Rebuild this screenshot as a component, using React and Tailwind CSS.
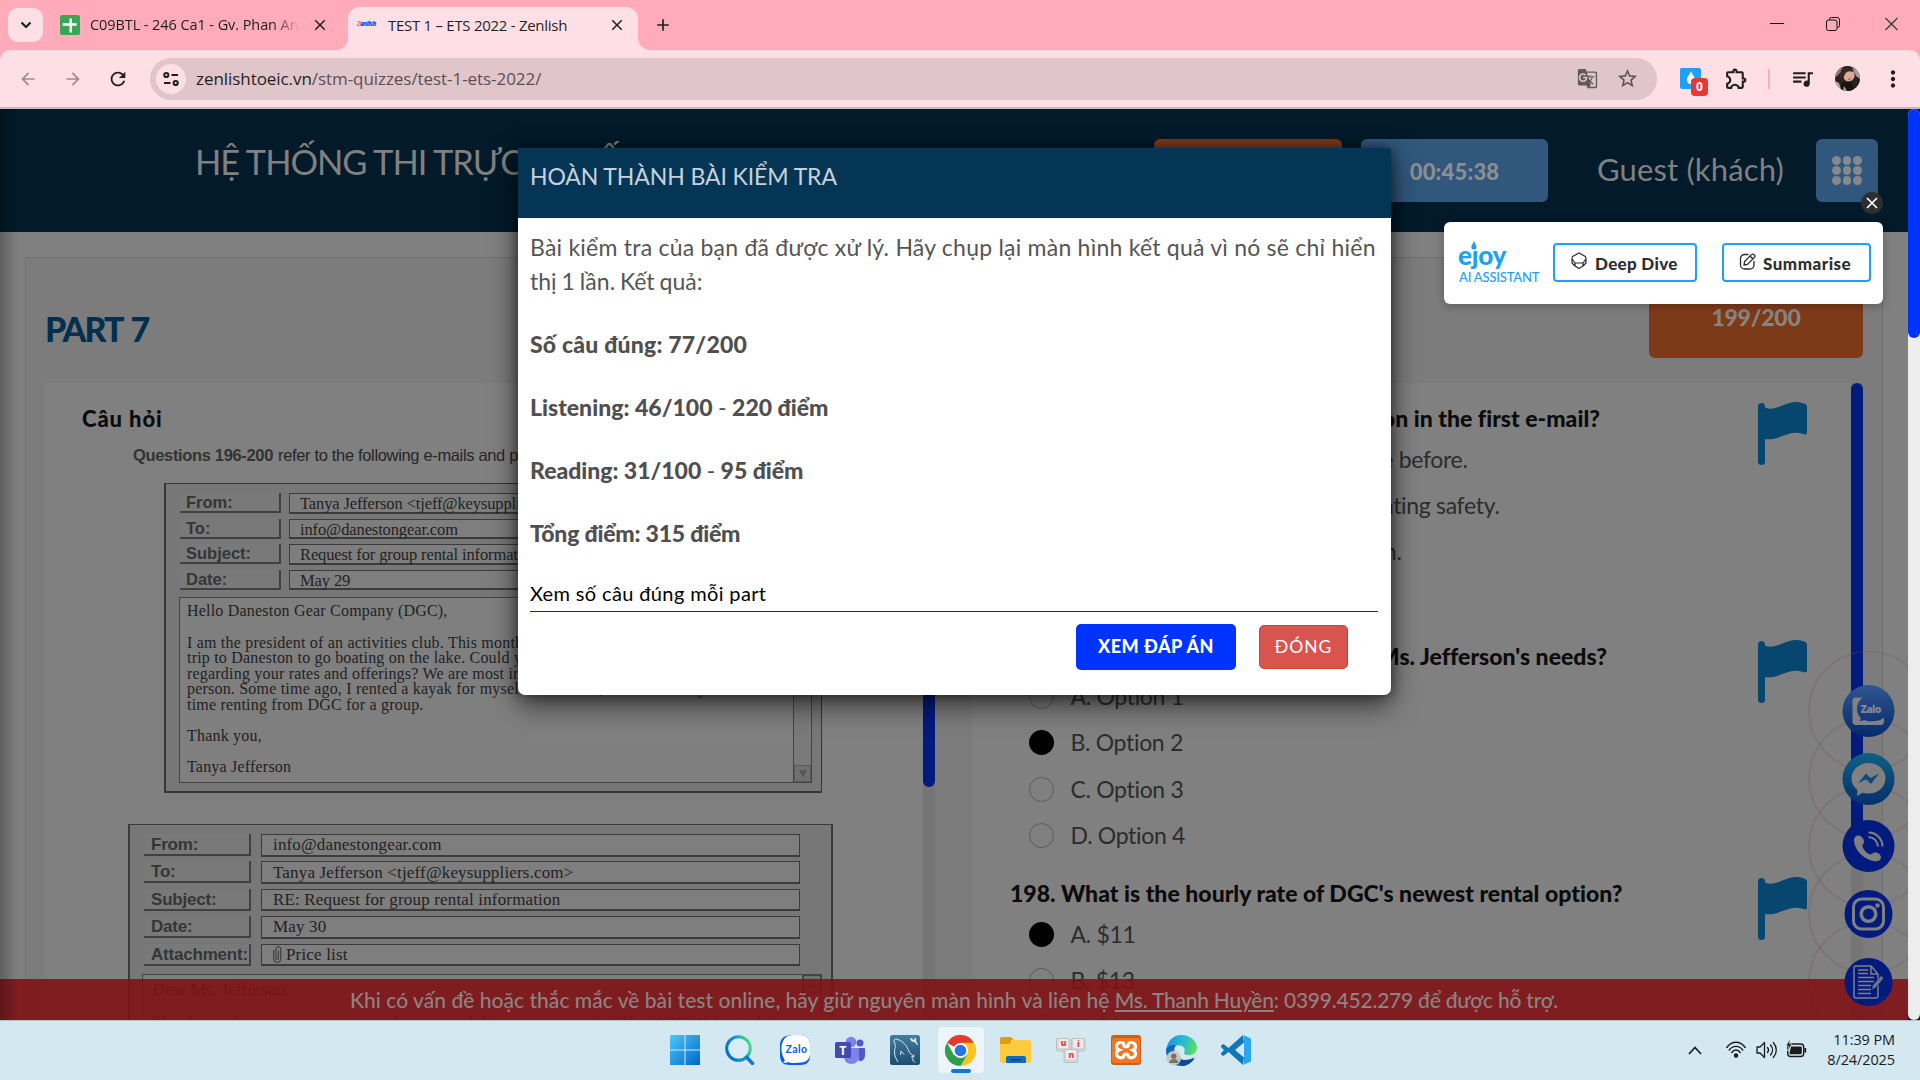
import React from "react";
import {
  MdArrowBack, MdArrowForward, MdRefresh, MdStarBorder, MdOutlineExtension,
  MdQueueMusic, MdMoreVert, MdGTranslate, MdClose, MdAdd,
} from "react-icons/md";

function TabStrip() {
  return (
    <div className="flex h-[50px] w-full bg-[#ffabba] font-['Open_Sans',sans-serif] text-[#1f1f1f]">
      <div className="flex w-[348px] items-start pl-2">
        <div className="mt-2 flex h-[34px] w-[35px] items-center justify-center rounded-[10px] bg-[#ffdfe6]">
          <svg width="12" height="8" viewBox="0 0 12 8" fill="none" stroke="#1f1f1f" strokeWidth="2.2"><path d="M1.5 1.5 6 6l4.500-4.500" /></svg>
        </div>
        <div className="ml-[17px] mt-[15px] flex h-5 w-5 items-center justify-center rounded-[2px] bg-[#34a853]">
          <svg width="16" height="16" viewBox="0 0 16 16"><path d="M9.500 1v14M1.500 7h14" stroke="#fff" strokeWidth="2.400" transform="translate(-.8 .5)" /></svg>
        </div>
        <div className="ml-[10px] mt-[11px] w-[209px] overflow-hidden whitespace-nowrap text-[14.500px] leading-7 tracking-[-0.080px] [mask-image:linear-gradient(to_right,black_88%,transparent)]">
          C09BTL - 246 Ca1 - Gv. Phan Anh
        </div>
        <MdClose className="ml-[12px] mt-[16px] h-[18px] w-[18px]" />
      </div>
      <div className="relative mt-[7px] flex h-[43px] w-[290px] rounded-t-[12px] bg-[#ffdfe6]">
        <svg className="absolute bottom-0 left-[-12px]" width="12" height="12"><path d="M12 0v12H0A12 12 0 0 0 12 0Z" fill="#ffdfe6" /></svg>
        <svg className="absolute bottom-0 right-[-12px]" width="12" height="12"><path d="M0 0v12h12A12 12 0 0 1 0 0Z" fill="#ffdfe6" /></svg>
        <div className="ml-[9px] mt-[12px] w-[21px] text-[6.500px] font-extrabold italic leading-[10px] tracking-[-0.600px] text-[#1d4fff]"><span className="text-[#ff8a1e]">Z</span>enlish</div>
        <div className="ml-[10px] mt-[4px] w-[218px] whitespace-nowrap text-[15px] leading-7 tracking-[-0.280px]">TEST 1 – ETS 2022 - Zenlish</div>
        <MdClose className="ml-[2px] mt-[9px] h-[18px] w-[18px]" />
      </div>
      <MdAdd className="ml-[15px] mt-[15px] h-5 w-5" />
      <div className="ml-auto flex items-start pr-[22px] pt-[17px]">
        <svg width="14" height="14" viewBox="0 0 14 14"><path d="M0 6.500h14" stroke="#111" /></svg>
        <svg className="ml-[42px]" width="14" height="14" viewBox="0 0 14 14" fill="none" stroke="#111"><rect x=".5" y="3" width="10.500" height="10.500" rx="2" /><path d="M3.500 3V2.500a2 2 0 0 1 2-2h5.500a2.500 2.500 0 0 1 2.500 2.500v5.500a2 2 0 0 1-2 2" /></svg>
        <svg className="ml-[45px]" width="13" height="14" viewBox="0 0 13 14"><path d="M.5 1l12 12M12.500 1l-12 12" stroke="#333" strokeWidth="1.100" /></svg>
      </div>
    </div>
  );
}

function Toolbar() {
  return (
    <div className="h-[57px] w-full bg-[#ffabba]">
      <div className="flex h-full w-full items-center rounded-t-[10px] bg-[#ffdfe6] font-['Open_Sans',sans-serif] text-[#1f1f1f]">
        <div className="flex w-[150px] shrink-0 items-center gap-[24.500px] pl-[18px]">
          <MdArrowBack className="h-5 w-5 text-[#a08b90]" />
          <MdArrowForward className="h-5 w-5 text-[#a08b90]" />
          <MdRefresh className="h-[22px] w-[22px]" />
        </div>
        <div className="flex h-[42px] w-[1507px] shrink-0 items-center rounded-full bg-[#e0c5ca] pl-[6px]">
          <div className="flex h-[30px] w-[30px] items-center justify-center rounded-full bg-[#ffdfe6]">
            <svg width="16" height="16" viewBox="0 0 16 16" fill="none" stroke="#1f1f1f" strokeWidth="2"><circle cx="3.300" cy="4" r="2.100" /><path d="M8.500 4H15M1 12h6.500" /><circle cx="12.700" cy="12" r="2.100" /></svg>
          </div>
          <div className="ml-[10px] whitespace-nowrap pt-[1px] text-[17px] leading-7 tracking-[-0.060px]">zenlishtoeic.vn<span className="text-[#5c4f52]">/stm-quizzes/test-1-ets-2022/</span></div>
          <MdGTranslate className="ml-auto h-[21px] w-[21px] text-[#5f5a5c]" />
          <MdStarBorder className="ml-[18px] mr-[18px] h-[23px] w-[23px] text-[#5a5255]" />
        </div>
        <div className="relative ml-[23px] h-[22px] w-[28px]">
          <div className="flex h-[21px] w-[21px] items-center justify-center rounded-[2px] bg-[#1da1f2]">
            <svg width="10" height="14" viewBox="0 0 10 14"><path d="M5 0c1 4 4 5 4 9a4 4 0 0 1-8 0c0-4 3-5 4-9Z" fill="#fff" /></svg>
          </div>
          <div className="absolute left-[11px] top-[10px] flex h-[18px] w-[17px] items-center justify-center rounded-[4px] bg-[#e53935] text-[12px] font-bold text-white">0</div>
        </div>
        <MdOutlineExtension className="ml-[16px] h-[25px] w-[25px]" />
        <div className="ml-[19px] h-5 w-[2px] bg-[#ffabba]" />
        <MdQueueMusic className="ml-[20px] h-[25px] w-[25px]" />
        <svg className="ml-[20px]" width="25" height="25" viewBox="0 0 25 25">
          <defs><clipPath id="av"><circle cx="12.500" cy="12.500" r="12.500" /></clipPath></defs>
          <g clipPath="url(#av)">
            <rect width="25" height="25" fill="#2a211f" />
            <path d="M0 12C0 4 5 0 8 0L6 6Z" fill="#8a7f7a" /><path d="M17 1l8 5v7l-4-3Z" fill="#a7a294" />
            <ellipse cx="14" cy="9.500" rx="5.500" ry="6" fill="#d9aa9c" transform="rotate(35 14 9.500)" />
            <path d="M6 4c4-4 11-3 12 2-5-2-8 0-9 5L5 12Z" fill="#3a2724" />
            <path d="M13 13.500l3-1" stroke="#b34b4b" strokeWidth="1.200" /><path d="M7 17l9-1 4 9H5Z" fill="#171314" /><path d="M9 20l3 5H8ZM0 15l4 2 2 6-6-2Z" fill="#b8a79d" />
          </g>
        </svg>
        <MdMoreVert className="ml-[20px] h-[26px] w-[26px]" />
      </div>
    </div>
  );
}

function SiteHeader() {
  return (
    <div className="flex h-[123px] items-start bg-[#021a29] pl-[195px] pt-[30px]">
      <div className="mt-[-7px] w-[959px] whitespace-nowrap font-['Lato',sans-serif] text-[34.500px] leading-[60px] tracking-[-1.070px] text-[#808080]">HỆ THỐNG THI TRỰC <span className="tracking-[0.300px]">TUYẾN</span></div>
      <div className="h-[63px] w-[188px] rounded-[6px] bg-[#7d3a19]" />
      <div className="ml-[19px] h-[63px] w-[187px] rounded-[6px] bg-[#31577d] text-center font-['Lato',sans-serif] text-[22px] font-black leading-[66px] tracking-[0.200px] text-[#8c8f92]">00:45:38</div>
      <div className="ml-[49px] w-[187px] whitespace-nowrap font-['Lato',sans-serif] text-[31px] leading-[60px] tracking-[0.150px] text-[#808080]">Guest (khách)</div>
      <div className="ml-[32px] grid h-[63px] w-[62px] grid-cols-3 content-center justify-center justify-items-center gap-x-[1px] gap-y-[1.500px] rounded-[6px] bg-[#31577d] px-[16px]">
        {Array.from({ length: 9 }, (_, i) => <div key={i} className="h-[8.500px] w-[8.500px] rounded-full bg-[#85898d]" />)}
      </div>
    </div>
  );
}

function MailRow({ label, value, big, clip }) {
  return big ? (
    <div className="flex h-[27.400px] gap-[10px] pl-[14px]">
      <div className="h-[22px] w-[107px] border-b-2 border-r-2 border-[#404040] bg-[#797979] pl-[7px] font-['Liberation_Sans',sans-serif] text-[17px] font-bold leading-[21px] tracking-[-0.200px] text-[#353535]">{label}</div>
      <div className="flex h-[22.500px] w-[539px] items-center border border-b-2 border-[#3c3c3c] bg-[#7e7e7e] pl-[11px] font-['Liberation_Serif',serif] text-[17px] leading-[22px] tracking-[0.160px] text-[#222]">
        {clip && <svg className="mr-[4px]" width="9" height="19" viewBox="0 0 9 19" fill="none" stroke="#333" strokeWidth="1"><path d="M.8 5v9a3.500 3.500 0 0 0 7 0V4a2.400 2.400 0 0 0-4.800 0v9.500a1.200 1.200 0 0 0 2.400 0V6" /></svg>}
        <span className="pt-[1px]">{value}</span>
      </div>
    </div>
  ) : (
    <div className="flex h-[25.600px] gap-[8px] pl-[14px]">
      <div className="h-[20px] w-[101px] border-b-2 border-r-2 border-[#404040] bg-[#797979] pl-[6px] font-['Liberation_Sans',sans-serif] text-[16.500px] font-bold leading-[18px] text-[#353535]">{label}</div>
      <div className="h-[20.500px] w-[511px] border border-b-2 border-[#3c3c3c] bg-[#7e7e7e] pl-[10px] font-['Liberation_Serif',serif] text-[16.500px] leading-[19px] tracking-[-0.120px] text-[#222]">{value}</div>
    </div>
  );
}

function LeftPanel() {
  const body = [
    "Hello Daneston Gear Company (DGC),", "",
    "I am the president of an activities club. This month, I am organizing a group",
    "trip to Daneston to go boating on the lake. Could you give me information",
    "regarding your rates and offerings? We are most interested in kayaks for one",
    "person. Some time ago, I rented a kayak for myself from DGC; this will be my first",
    "time renting from DGC for a group.", "", "Thank you,", "", "Tanya Jefferson",
  ];
  return (
    <div className="h-[640px] w-[878px] overflow-hidden bg-[#808080]">
      <div className="mt-[19px] pl-[37px] font-['Lato',sans-serif] text-[22px] font-black leading-[34px] tracking-[0.900px] text-[#0b0b0b]">Câu hỏi</div>
      <div className="flex h-[38px] gap-[5px] whitespace-nowrap pl-[88px] font-['Liberation_Sans',sans-serif] text-[16.500px] leading-[38px] tracking-[-0.340px] text-[#262626]">
        <b className="text-[#333]">Questions 196-200</b><span>refer to the following e-mails and price list.</span>
      </div>
      <div className="ml-[119px] mt-[9px] h-[310px] w-[658px] border border-b-2 border-l-2 border-[#363636] bg-[#777] pt-[9px]">
        <MailRow label="From:" value="Tanya Jefferson <tjeff@keysuppliers.com>" />
        <MailRow label="To:" value="info@danestongear.com" />
        <MailRow label="Subject:" value="Request for group rental information" />
        <MailRow label="Date:" value="May 29" />
        <div className="ml-[13px] mt-[2px] flex h-[186px] w-[633px] border border-[#444] bg-[#7f7f7f]">
          <div className="w-[615px] border-r border-[#444] pl-[7px] pt-[5px] font-['Liberation_Serif',serif] text-[16px] leading-[15.600px] tracking-[0.200px] text-[#222]">
            {body.map((t, i) => <div key={i} className="h-[15.600px] whitespace-pre">{t}</div>)}
          </div>
          <div className="flex w-[17px] items-end bg-[#7a7a7a]">
            <div className="flex h-[17px] w-[17px] items-center justify-center border border-[#5a5a5a] bg-[#707070]"><svg width="8" height="8"><path d="M0 0h8L4 8Z" fill="#555" /></svg></div>
          </div>
        </div>
      </div>
      <div className="ml-[83px] mt-[31px] h-[310px] w-[705px] border-2 border-t border-[#3a3a3a] bg-[#777] pt-[9px]">
        <MailRow big label="From:" value="info@danestongear.com" />
        <MailRow big label="To:" value="Tanya Jefferson <tjeff@keysuppliers.com>" />
        <MailRow big label="Subject:" value="RE: Request for group rental information" />
        <MailRow big label="Date:" value="May 30" />
        <MailRow big label="Attachment:" value="Price list" clip />
        <div className="ml-[12px] mt-[3px] flex h-[186px] w-[680px] border border-[#444] bg-[#7f7f7f]">
          <div className="w-[661px] whitespace-nowrap border-r border-[#444] pl-[9px] pt-[6px] font-['Liberation_Serif',serif] text-[17.500px] leading-[16.500px] text-[#222]">
            <div>Dear Ms. Jefferson,</div>
            <div className="mt-[16.500px]">Thank you for contacting us regarding your club's upcoming visit. The DGC Web site lists</div>
          </div>
          <div className="flex h-[18px] w-[18px] items-center justify-center border border-[#444] bg-[#707070]"><svg width="8" height="8"><path d="M0 8h8L4 0Z" fill="#5a5a5a" /></svg></div>
        </div>
      </div>
    </div>
  );
}

function Option({ text, on, cls = "" }) {
  return (
    <div className="flex h-[46.200px] items-center pl-[19px]">
      <div className={on ? "h-[25px] w-[25px] shrink-0 rounded-full bg-black" : "h-[25px] w-[25px] shrink-0 rounded-full border border-[#5c5c5c]"} />
      <div className={"ml-[16.500px] whitespace-nowrap font-['Lato',sans-serif] text-[23px] leading-[45px] tracking-[-0.320px] text-[#2c2c2c] " + cls}>{text}</div>
    </div>
  );
}

function Question({ title, titleCls = "", children }) {
  return (
    <div className="mb-[18.800px] flex h-[218.800px] items-start">
      <div className="w-[748px]">
        <div className={"whitespace-nowrap font-['Lato',sans-serif] text-[23px] font-black leading-[33px] tracking-[0.020px] text-[#0b0b0b] " + titleCls}>{title}</div>
        <div className="pt-[1px]">{children}</div>
      </div>
      <svg width="49" height="63" viewBox="0 0 49 63" fill="#06466f">
        <rect x="0" y="1" width="7" height="62" rx="3.500" />
        <path d="M7 5.500C17 10 27 0 38 0c5 0 11 1.500 11 4.500V30c0 2.500-1.500 3-4 2-14-5.500-24 7.500-38 5Z" />
      </svg>
    </div>
  );
}

function RightPanel() {
  return (
    <div className="h-[640px] w-[878px] overflow-hidden bg-[#808080] pl-[37px] pt-[19px]">
      <Question title="196. What does Ms. Jefferson mention in the first e-mail?" titleCls="w-[590px] text-right">
        <Option text="A. She has been to this lake before." cls="w-[397px] text-right" />
        <Option text="B. She is concerned about boating safety." cls="w-[429px] text-right" />
        <Option text="C. She is training her son." cls="w-[331px] text-right" />
        <Option text="D. She lives near a lake." />
      </Question>
      <Question title="197. Which option best meets Ms. Jefferson's needs?" titleCls="w-[597px] text-right">
        <Option text="A. Option 1" />
        <Option text="B. Option 2" on />
        <Option text="C. Option 3" />
        <Option text="D. Option 4" />
      </Question>
      <Question title="198. What is the hourly rate of DGC's newest rental option?">
        <Option text="A. $11" on />
        <Option text="B. $13" />
        <Option text="C. $14" />
      </Question>
    </div>
  );
}

function QuizPage() {
  return (
    <div className="px-[25px] pt-[25px]">
      <div className="h-[800px] w-[1858px] border border-[#6f6f6f] bg-[#7c7c7c] pl-[19px] pr-[19px]">
        <div className="flex h-[125px] items-start justify-between">
          <div className="mt-[46px] font-['Lato',sans-serif] text-[34px] font-black leading-[50px] tracking-[-2px] text-[#022f4f] [word-spacing:3px]">PART 7</div>
          <div className="mt-[20px] h-[80px] w-[214px] rounded-[6px] bg-[#7d3a19] pt-[19px] text-center font-['Lato',sans-serif] text-[23px] font-black leading-[40px] tracking-[-0.270px] text-[#8a8480]">199/200</div>
        </div>
        <div className="flex">
          <LeftPanel />
          <div className="h-[640px] w-[12px] bg-[#757575]"><div className="h-[404px] rounded-full bg-[#001a7e]" /></div>
          <div className="w-[38px]" />
          <RightPanel />
          <div className="h-[640px] w-[12px] bg-[#757575]"><div className="h-[466px] rounded-full bg-[#001a7e]" /></div>
        </div>
      </div>
    </div>
  );
}

function Modal() {
  const bold = "mt-[29px] h-[34px] whitespace-nowrap font-black text-[#4f4f4f]";
  return (
    <div className="absolute left-[518px] top-[39px] h-[547px] w-[873px] rounded-b-[7px] bg-white font-['Lato',sans-serif] shadow-[0_10px_28px_rgba(0,0,0,0.600),0_0_12px_rgba(0,0,0,0.450)]">
      <div className="h-[70px] bg-[#053555] pl-[12px] pt-[11px] text-[23px] leading-[35px] tracking-[-0.100px] text-[#c6d2db]">HOÀN THÀNH BÀI KIỂM TRA</div>
      <div className="px-[12px] pt-[11.500px] text-[23px] leading-[34px] text-[#555]">
        <div className="whitespace-nowrap tracking-[0.230px]">Bài kiểm tra của bạn đã được xử lý. Hãy chụp lại màn hình kết quả vì nó sẽ chỉ hiển<br /><span className="tracking-[0px] [word-spacing:-1px]">thị 1 lần. Kết quả:</span></div>
        <div className={bold + " tracking-[0.200px]"}>Số câu đúng: 77/200</div>
        <div className={bold + " tracking-[0.010px]"}>Listening: 46/100 <span className="font-normal">-</span> 220 điểm</div>
        <div className={bold + " tracking-[-0.030px]"}>Reading: 31/100 <span className="font-normal">-</span> 95 điểm</div>
        <div className={bold + " tracking-[-0.200px]"}>Tổng điểm: 315 điểm</div>
        <div className="mt-[26.500px] w-[848px] border-b border-[#053555] pb-[1px] text-[20px] tracking-[0.370px] text-black">Xem số câu đúng mỗi part</div>
      </div>
      <div className="mt-[12px] flex items-center justify-end gap-[23px] pr-[43px] text-white">
        <div className="h-[46px] w-[160px] rounded-[5px] bg-[#0033ff] text-center text-[18px] font-black leading-[44px] tracking-[0.500px]">XEM ĐÁP ÁN</div>
        <div className="h-[44px] w-[89px] rounded-[5px] border border-[#d43f3a] bg-[#d9534f] text-center text-[17.500px] leading-[42px] tracking-[1px]">ĐÓNG</div>
      </div>
    </div>
  );
}

function EjoyPanel() {
  const btn = "flex h-[39px] items-center rounded-[4px] border-2 border-[#1da1f2] font-['Lato',sans-serif] text-[17px] font-black text-[#2f2f2f]";
  return (
    <div className="absolute left-[1444px] top-[113px] flex h-[82px] w-[439px] items-start rounded-[6px] bg-white pl-[14px] pt-[21px] shadow-[0_2px_10px_rgba(0,0,0,0.250)]">
      <div className="relative w-[95px] font-['Lato',sans-serif] text-[#1da1f2]">
        <div className="mt-[-1px] text-[26px] font-black leading-[26px] tracking-[-0.200px]">ejoy</div>
        <svg className="absolute left-[11px] top-[-3px] bg-white" width="9" height="10" viewBox="0 0 9 10"><path d="M5 0c0 3 2.500 4.500 2.500 7A2.600 2.600 0 0 1 4.900 9.600 2.600 2.600 0 0 1 2.300 7C2.300 4.500 5 3 5 0Z" fill="#1da1f2" /></svg>
        <div className="mt-[1px] whitespace-nowrap pl-[1px] text-[13px] font-medium leading-[16px] tracking-[-0.180px]">AI ASSISTANT</div>
      </div>
      <div className={btn + " w-[144px] pl-[16px] tracking-[0.300px]"}>
        <svg className="mr-[8px] mt-[-3px]" width="16" height="18" viewBox="0 0 16 18" fill="none" stroke="#2b2b2b" strokeWidth="1.200" strokeLinejoin="round"><path d="M8 1 14.500 4.500 15 7l-3 4H4L1 7l.5-2.500ZM1 7v4l3 3v-3M15 7v4l-3 3v-3M4 14l4 2.500 4-2.500" /></svg>
        <span className="pt-[2px]">Deep Dive</span>
      </div>
      <div className={btn + " ml-[25px] w-[149px] pl-[15px] tracking-[0.500px]"}>
        <svg className="mr-[7px] mt-[-3px]" width="17" height="17" viewBox="0 0 17 17" fill="none" stroke="#2b2b2b" strokeWidth="1.300" strokeLinecap="round" strokeLinejoin="round"><path d="M9 1.500H5.500a4 4 0 0 0-4 4V12a4 4 0 0 0 4 4H11a4 4 0 0 0 4-4V8.500M5 12l.6-3.500L12.500 1.600a1.700 1.700 0 0 1 2.500 0l.4.4a1.700 1.700 0 0 1 0 2.400L8.500 11.400ZM11 3l3 3" /></svg>
        <span className="pt-[2px]">Summarise</span>
      </div>
      <div className="absolute left-[417px] top-[-30px] flex h-[22px] w-[22px] items-center justify-center rounded-full bg-[#2e2e2e]">
        <svg width="12" height="12" viewBox="0 0 12 12"><path d="M1 1l10 10M11 1 1 11" stroke="#fff" strokeWidth="1.700" /></svg>
      </div>
    </div>
  );
}

function Rings() {
  return (
    <svg className="absolute left-[1806px] top-[530px]" width="102" height="381" viewBox="1806 639 102 381" fill="none" stroke="#7a4a4e" strokeOpacity=".28" strokeWidth="1.600">
      <circle cx="1868.500" cy="711" r="59.500" /><circle cx="1868.500" cy="778.500" r="59.500" /><circle cx="1868.500" cy="846.500" r="59.500" /><circle cx="1868.500" cy="913.500" r="59.500" /><circle cx="1868.500" cy="982" r="59.500" />
    </svg>
  );
}

function ContactButtons() {
  return (
    <div className="absolute left-[1842px] top-[576px] flex flex-col items-center gap-[15.700px]">
      <svg width="53" height="52" viewBox="0 0 53 52">
        <defs><linearGradient id="za" x1="0" y1="0" x2="0" y2="1"><stop offset="0" stopColor="#31558f" /><stop offset="1" stopColor="#042a6b" /></linearGradient></defs>
        <circle cx="26.500" cy="26" r="26" fill="url(#za)" />
        <path d="M20.500 12.500H14a3.500 3.500 0 0 0-3.500 3.500v20.500A3.500 3.500 0 0 0 14 40h24.500a3.500 3.500 0 0 0 3.500-3.500v-4c-4 4-14 5-20 2.500-2 1-3.500 1-5 .5 1-.5 2-1.500 1.500-3-5-5-5-14.500 2-20Z" fill="#808286" />
        <text x="18.500" y="27.500" fontSize="10.500" fontWeight="800" fontFamily="Open Sans, sans-serif" fill="#808890" textLength="21">Zalo</text>
      </svg>
      <svg width="53" height="52" viewBox="0 0 53 52">
        <defs><linearGradient id="ms" x1="0" y1="0" x2="0" y2="1"><stop offset="0" stopColor="#0f5f86" /><stop offset="1" stopColor="#05306a" /></linearGradient></defs>
        <circle cx="26.500" cy="26" r="26" fill="url(#ms)" />
        <path d="M26.500 10C17 10 9.500 17 9.500 25.500c0 4.500 2 8.500 6 11.500l-.5 6 5.500-3.200c2 .5 4 .8 6 .8 9.500 0 17-6.600 17-15.300S36 10 26.500 10Z" fill="#808080" />
        <path d="M16 30.500 24 20.500l4.500 4.500 8.500-4.500-8 10.500-5-4.700Z" fill="#0a4c7d" />
      </svg>
      <svg width="53" height="52" viewBox="0 0 53 52">
        <circle cx="26.500" cy="26" r="26" fill="#001a7e" />
        <path d="M12 20c0-3 2.500-5 5-4.500 2.500.4 5 3.500 5 6s-2 3-1.500 5c1.500 4 4 6.500 7.500 8 2 .7 2.500-2.500 5.500-2.300 3 .3 6 3 5.500 5.500-.5 2.600-3.500 4-6.500 3.500C21.500 39.500 12 29.500 12 20Z" fill="#808080" />
        <path d="M26.500 12.500c8 0 14 6.500 14 14M26.500 17c5.500.5 9 4.500 9.500 9.500" fill="none" stroke="#808080" strokeWidth="2" />
      </svg>
      <svg width="53" height="52" viewBox="0 0 53 52">
        <circle cx="26.500" cy="26" r="24" fill="#001a7e" />
        <g fill="none" stroke="#808080" strokeWidth="3"><rect x="11.500" y="11" width="30" height="30" rx="8" /><circle cx="26.500" cy="26" r="7.300" strokeWidth="3.600" /></g>
        <circle cx="35.500" cy="17.500" r="2.200" fill="#808080" />
      </svg>
      <svg width="53" height="52" viewBox="0 0 53 52">
        <circle cx="26.500" cy="26" r="24" fill="#001a7e" />
        <g fill="none" stroke="#808080" strokeWidth="1.500"><path d="M36 18v22a2 2 0 0 1-2 2H14a2 2 0 0 1-2-2V12a2 2 0 0 1 2-2h15l7 8M29 10v8h7" /><path d="M16 14h10M16 17.500h10M16 21.500h16M16 25.500h16M16 29.500h13M16 33.500h13M16 37.500h13" /></g>
        <path d="m29.500 34 1-4.500L39 19.500l3 2.500-8.500 10Z" fill="#6f7488" stroke="#001a7e" strokeWidth=".7" />
      </svg>
    </div>
  );
}

function NoticeBar() {
  return (
    <div className="absolute left-0 top-[870px] h-[41px] w-[1908px] whitespace-nowrap bg-[#7e1216]/90 pl-[350px] font-['Lato',sans-serif] text-[21px] font-medium leading-[42px] text-[#8c8383]">
      <span className="tracking-[0.035px]">Khi có vấn đề hoặc thắc mắc về bài test online, hãy giữ nguyên màn hình và liên hệ </span>
      <span className="tracking-[-0.230px] underline underline-offset-2">Ms. Thanh Huyền</span>
      <span className="tracking-[-0.220px]">: 0399.452.279 để được hỗ trợ.</span>
    </div>
  );
}

const taskIcons = [
  <svg viewBox="0 0 30 30" width="30" height="30"><defs><linearGradient id="w" x1="0" y1="0" x2="1" y2="1"><stop offset="0" stopColor="#4cc8fa" /><stop offset="1" stopColor="#0067c5" /></linearGradient></defs><path d="M0 0h14.500v14.500H0ZM15.500 0H30v14.500H15.500ZM0 15.500h14.500V30H0ZM15.500 15.500H30V30H15.500Z" fill="url(#w)" /></svg>,
  <svg viewBox="0 0 30 30" width="30" height="30"><defs><linearGradient id="s" x1="0" y1=".6" x2="1" y2=".2"><stop offset="0" stopColor="#0a6fc4" /><stop offset=".5" stopColor="#1694d0" /><stop offset="1" stopColor="#57e07a" /></linearGradient></defs><circle cx="13.500" cy="13.500" r="11.800" fill="#d8eef4" stroke="url(#s)" strokeWidth="3" /><path d="m21.500 22 6 6.500" stroke="#0f78cc" strokeWidth="3.400" strokeLinecap="round" /></svg>,
  <svg viewBox="0 0 30 30" width="30" height="30"><path d="M12 0h8c7 0 10 3 10 10v10c0 7-3 10-10 10H10C3 30 0 27 0 20V10C0 4 4 0 12 0Z" fill="#0a5cf0" /><path d="M13 0h7c7 0 10 3 10 10v8c0 6-3 9-9 9.500-6 .5-10 1-13-.5-2 1-3.500 1-5 .5 1.200-.8 2-1.500 1.500-3C-.5 16 .5 5 8 .8Z" fill="#fff" /><text x="5.500" y="17.500" fontSize="10.500" fontWeight="700" fontFamily="Lato, sans-serif" fill="#0a5cf0" textLength="21.500">Zalo</text></svg>,
  <svg viewBox="0 0 30 30" width="30" height="30"><circle cx="16" cy="7" r="5.300" fill="#7b83eb" /><circle cx="25" cy="8" r="3.500" fill="#5059c9" /><path d="M20 13h9a1 1 0 0 1 1 1v7a5 5 0 0 1-6 5Z" fill="#5059c9" /><path d="M9 13h15v8c0 5-3 8-7.500 8S9 26 9 21Z" fill="#7b83eb" /><rect y="7" width="16" height="16" rx="1.500" fill="#444ab0" /><text x="4.300" y="19.500" fontSize="12.500" fontWeight="700" fontFamily="Open Sans, sans-serif" fill="#fff">T</text></svg>,
  <svg viewBox="0 0 30 30" width="30" height="30"><defs><linearGradient id="my" x1="0" y1="0" x2="0" y2="1"><stop offset="0" stopColor="#457d9e" /><stop offset="1" stopColor="#1c4d6e" /></linearGradient></defs><rect width="30" height="30" rx="2.500" fill="url(#my)" /><path d="M8 27C6.500 24 4.500 22 4.500 17c0-4 2-5.500 0-9C3 5 5 3 8 4.500c5 2 9 6 10.500 11 .5 2.500 3 4 6 5.500l-3 1 2 1.500-1 1.500 2.500 2.500M10.500 20l.5-4 3 3.500" fill="none" stroke="#dbe9f0" strokeWidth="1" /><path d="M20 3.500 22 3l1 2 1.500-.5L24.500 2.500c2 .5 2 2.500 1.500 3.500l2 3.500-1 .5-2.500-3C22.500 7.500 20.500 6 20 3.500Z" fill="#dbe9f0" /></svg>,
  <svg viewBox="0 0 30 30" width="31" height="31"><path d="M15 15 2 7.500A15 15 0 0 1 28 7.500Z" fill="#e33b2e" /><path d="M28 7.500H15L21.500 19 15 30A15 15 0 0 0 28 7.500Z" fill="#fcc31e" /><path d="M2 7.500 8.500 19 15 22l6.500-3L15 30A15 15 0 0 1 2 7.500Z" fill="#2f9e4d" /><circle cx="15" cy="15" r="7.200" fill="#fff" /><circle cx="15" cy="15" r="5.600" fill="#2a72ea" /></svg>,
  <svg viewBox="0 0 31 30" width="31" height="30"><path d="M0 4a2 2 0 0 1 2-2h9l3 3h-3v5H0Z" fill="#dd9d0c" /><path d="M0 9h9l4-4h16a2 2 0 0 1 2 2v19a2 2 0 0 1-2 2H2a2 2 0 0 1-2-2Z" fill="#fdcb3f" /><path d="M6 28v-5a2 2 0 0 1 2-2h16a2 2 0 0 1 2 2v5Z" fill="#0f6cbf" /><path d="M11 25h10" stroke="#08407c" strokeWidth="1.400" /></svg>,
  <svg viewBox="0 0 30 30" width="30" height="30"><g fill="#d4d4d4" stroke="#b9b9b9" strokeWidth=".8"><rect x=".5" y="3.500" width="13.500" height="12.500" rx="1.500" /><rect x="15.500" y="3.500" width="13.500" height="12.500" rx="1.500" /><rect x="8" y="14.500" width="14" height="13" rx="1.500" /></g><g fill="#ececec"><rect x="2.500" y="4" width="9.500" height="9" rx="1" /><rect x="17.500" y="4" width="9.500" height="9" rx="1" /><rect x="10" y="15" width="10" height="9.500" rx="1" /></g><g fill="#f0474c" fontSize="9" fontWeight="800" fontFamily="Open Sans, sans-serif"><text x="4.500" y="11">u</text><text x="21" y="11.500">i</text><text x="12.300" y="22.500">n</text></g></svg>,
  <svg viewBox="0 0 30 30" width="30" height="30"><rect width="30" height="30" rx="3" fill="#c9601b" /><rect x="1" y="3" width="28" height="25" rx="2.500" fill="#f5761f" /><path d="M10.500 7.500c-3.500 0-5 2-5 4 0 1.800 1 3 2.500 3.500-1.500.6-2.500 2-2.500 3.800 0 2.200 1.800 4 4.500 4 2 0 3-1.300 3-3 1-1 3-1 4 0 0 1.700 1 3 3 3 2.700 0 4.500-1.800 4.500-4 0-1.800-1-3.200-2.500-3.800 1.500-.5 2.500-1.700 2.500-3.500 0-2-1.500-4-5-4-2 0-2.500 1.500-2.500 3.500-1 1-3 1-4 0 0-2-.5-3.500-2.500-3.500Z" fill="none" stroke="#fff" strokeWidth="3.200" /></svg>,
  <svg viewBox="0 0 30 30" width="31" height="31"><defs><linearGradient id="e" x1="0" y1=".2" x2="1" y2=".4"><stop offset="0" stopColor="#1b8fe0" /><stop offset=".6" stopColor="#27c0cf" /><stop offset="1" stopColor="#5fdc60" /></linearGradient></defs><path d="M0 15C1 6 7 0 15 0s15 6 15 12c0 5-4 7.500-8 7.500-3 0-5-1-4.500-2.300C19 15 18 10 12 10 6 10 1 13 0 15Z" fill="url(#e)" /><path d="M0 15c0-4 6-6.500 10-5-1 .8-2 3-2 5 0 6 5 10 12 9 4-.4 6-2 7.500-2C25 27 20 30 15 30 7 30 0 24 0 15Z" fill="#0f68b8" /><path d="M12 14c-3 4 0 11 8 10.500 4-.2 6-2 7.500-2C25 27 20 30 15 30c-4-3-6-10-3-16Z" fill="#0b4c97" /><circle cx="7.500" cy="22.500" r="7" fill="#c9c6c2" /><circle cx="7.500" cy="20.500" r="2.600" fill="#77726d" /><path d="M3 27c.5-5 8.500-5 9 0Z" fill="#77726d" /></svg>,
  <svg viewBox="0 0 30 30" width="30" height="30"><path d="M22 0 7.500 13 2.500 9 0 10.500v1.500l3 3-3 3v1.500L2.500 21l5-4L22 30l1-7.500-9-7.500 9-7.500Z" fill="#1177bb" /><path d="M22 0 30 3.500v23L22 30c1-1 1-2 1-3V3c0-1 0-2-1-3Z" fill="#2ba5ee" /></svg>,
];

function Taskbar() {
  return (
    <div className="flex h-[60px] w-full items-start border-t border-[#b4c1c8] bg-[#d4e8f2]">
      <div className="ml-[657px] flex pt-[5px]">
        {taskIcons.map((icon, i) => (
          <div key={i} className="flex h-[48px] w-[55.200px] items-center justify-center">
            {i === 5 ? (
              <div className="relative flex h-[48px] w-[48px] items-center justify-center rounded-[5px] border border-[#d8e4ea] bg-[#ecf5f9]">
                {icon}
                <div className="absolute bottom-0 left-[13px] h-[4px] w-[20px] rounded-full bg-[#0f78d0]" />
              </div>
            ) : icon}
          </div>
        ))}
      </div>
      <div className="ml-auto flex pr-[25px] font-['Open_Sans',sans-serif] text-[#1b1b1b]">
        <svg className="mt-[25px]" width="14" height="9" viewBox="0 0 14 9" fill="none" stroke="#1b1b1b" strokeWidth="1.700"><path d="m1 8 6-6.500L13 8" /></svg>
        <svg className="ml-[24px] mt-[20px]" width="20" height="18" viewBox="0 0 20 18" fill="none" stroke="#1b1b1b" strokeWidth="1.400" strokeLinecap="round"><path d="M.8 6.500C5.500-.5 14.500-.5 19.200 6.500M3.300 9c3.500-4.800 9.900-4.800 13.400 0M5.800 11.500c2.300-3.300 6.100-3.300 8.400 0" /><circle cx="10" cy="14.500" r="1.500" fill="#1b1b1b" /></svg>
        <svg className="ml-[10px] mt-[19px]" width="21" height="20" viewBox="0 0 21 20" fill="none" stroke="#1b1b1b" strokeWidth="1.300" strokeLinecap="round" strokeLinejoin="round"><path d="M1 7h3l4.500-4.500v15L4 13H1ZM11.500 7.500c1.300 1.500 1.300 3.500 0 5M14.500 5c2.700 3 2.700 7 0 10M17.300 2.500c4 4.500 4 10.500 0 15" /></svg>
        <svg className="ml-[9px] mt-[18px]" width="21" height="20" viewBox="0 0 21 20"><rect x="1.700" y="5" width="16" height="12.500" rx="3" fill="none" stroke="#1b1b1b" strokeWidth="1.400" /><path d="M5 7.500h9.500c1 0 1.300.5 1.300 1.300v5c0 1-.5 1.400-1.300 1.400H4.500c-.8 0-1-.5-1-1.300ZM18.500 9h1.700v4.500h-1.700Z" fill="#1b1b1b" /><path d="M4 0 0 7h2.500L1.500 12 6 5H3.500Z" fill="#1b1b1b" stroke="#d4e8f2" strokeWidth=".6" /></svg>
        <div className="ml-[19px] mt-[9px] w-[69px] whitespace-nowrap text-right text-[14.500px] leading-[20px] tracking-[-0.100px]">
          <div>11:39 PM</div><div>8/24/2025</div>
        </div>
      </div>
    </div>
  );
}

export default function App() {
  return (
    <div className="flex h-[1080px] w-[1920px] flex-col overflow-hidden bg-white">
      <TabStrip />
      <Toolbar />
      <div className="h-[2px] w-full bg-[#cdb5ba]" />
      <div className="flex h-[911px] w-full">
        <div className="relative h-[911px] w-[1908px] overflow-hidden bg-[#808080]">
          <SiteHeader />
          <QuizPage />
          <Rings />
          <NoticeBar />
          <ContactButtons />
          <div className="absolute left-0 top-0 h-full w-[18px] bg-gradient-to-r from-black/25 to-transparent" />
          <Modal />
          <EjoyPanel />
        </div>
        <div className="h-[911px] w-[12px] bg-[#1a1a1a]">
          <div className="h-full rounded-full bg-[#ededed]">
            <div className="h-[229px] rounded-full bg-[#0033ff]" />
          </div>
        </div>
      </div>
      <Taskbar />
    </div>
  );
}
